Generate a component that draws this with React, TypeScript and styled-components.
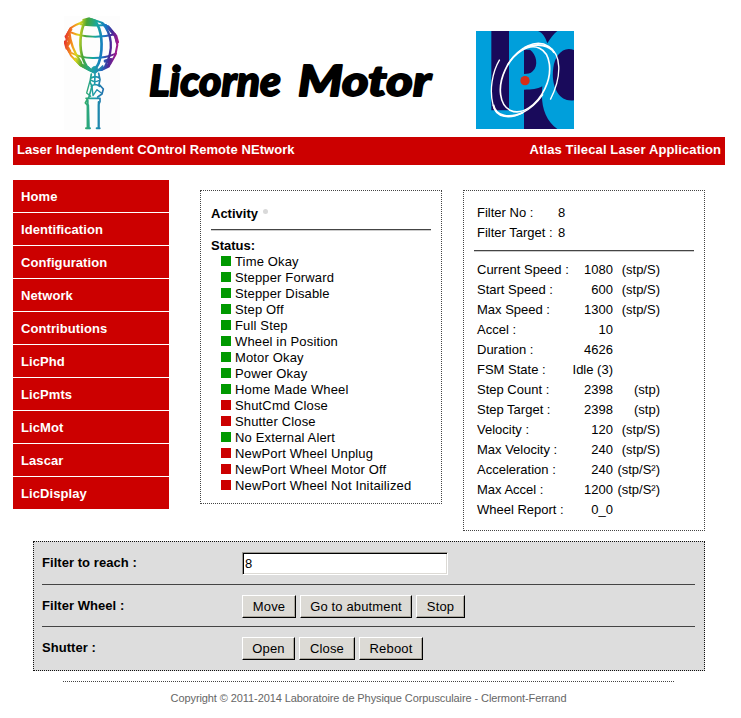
import React from "react";
import styled, { createGlobalStyle } from "styled-components";

const GlobalStyle = createGlobalStyle`
  *, *::before, *::after { box-sizing: border-box; }
  body {
    margin: 0;
    background: #fff;
    color: #000;
    font-family: "Liberation Sans", Arial, Helvetica, sans-serif;
    font-size: 13px;
    line-height: 16px;
  }
`;

const Page = styled.div`
  width: 741px;
  height: 718px;
  padding: 0 13px;
  overflow: hidden;
`;

const Header = styled.header`
  display: flex;
  align-items: flex-start;
  height: 137px;
  padding-left: 51px;
`;

const AtlasMark = styled.svg`
  flex: none;
  width: 56px;
  height: 114px;
  margin-top: 16px;
`;

const Wordmark = styled.svg`
  flex: none;
  width: 300px;
  height: 50px;
  margin: 55px 0 0 20px;
  font-family: Lato, "Liberation Sans", sans-serif;
  font-size: 42px;
  font-weight: 900;
  font-style: italic;
  stroke: #000;
  stroke-width: 1.8px;
  stroke-linejoin: round;
`;

const LpcMark = styled.svg`
  flex: none;
  width: 98px;
  height: 98px;
  margin: 31px 0 0 36px;
`;

const TitleBar = styled.div`
  display: flex;
  justify-content: space-between;
  width: 712px;
  height: 28px;
  padding: 5px 4px;
  background: #cc0000;
  color: #fff;
  font-weight: bold;
`;

const Tagline = styled.span<{ $tracking: number }>`
  letter-spacing: ${(p) => p.$tracking}px;
`;

const Columns = styled.div`
  display: flex;
  align-items: flex-start;
  height: 376px;
  padding-top: 15px;
`;

const Nav = styled.nav`
  display: flex;
  flex: none;
  flex-direction: column;
  gap: 1px;
  width: 156px;
  margin-right: 31px;
`;

const NavLink = styled.a`
  height: 32px;
  padding: 9px 8px 7px;
  background: #cc0000;
  color: #fff;
  font-weight: bold;
  letter-spacing: 0.08px;
`;

const Panel = styled.section<{ $height: number }>`
  flex: none;
  width: 242px;
  height: ${(p) => p.$height}px;
  margin-top: 10px;
  padding: 10px;
  border: 1px dotted #444;

  & + & {
    margin-left: 21px;
  }
`;

const Rule = styled.hr<{ $gap: string; $soft?: boolean }>`
  height: 1px;
  margin: ${(p) => p.$gap};
  border: 0;
  background: #444;
  box-shadow: ${(p) => (p.$soft ? "0 1px #ccc" : "none")};
`;

const Activity = styled.div`
  display: flex;
  height: 28px;
  padding-top: 5px;
  font-weight: bold;
`;

const Pulse = styled.span`
  width: 5px;
  height: 5px;
  margin: 3px 0 0 5px;
  border-radius: 50%;
  background: #d9d9d9;
`;

const StatusList = styled.ul`
  margin: 0;
  padding: 0 0 0 10px;
  list-style: none;
  letter-spacing: 0.15px;
`;

const StatusItem = styled.li`
  display: flex;
  gap: 4px;
  height: 16px;
  white-space: nowrap;
`;

const Lamp = styled.span<{ $ok: boolean }>`
  width: 10px;
  height: 10px;
  margin-top: 2px;
  background: ${(p) => (p.$ok ? "#009900" : "#cc0000")};
`;

const FilterSummary = styled.div`
  padding-top: 2px;
  height: 40px;
`;

const Reading = styled.div<{ $columns: string }>`
  display: grid;
  grid-template-columns: ${(p) => p.$columns};
  height: 20px;
  padding: 2px 0 2px 3px;
  white-space: nowrap;
`;

const Right = styled.span`
  text-align: right;
`;

const ControlBox = styled.form`
  width: 672px;
  height: 130px;
  margin-left: 20px;
  padding: 10px 9px 0 8px;
  background: #ddd;
  border: 1px dotted #111;
`;

const ControlRow = styled.div`
  display: flex;
  height: 23px;
`;

const ControlLabel = styled.label`
  width: 200px;
  padding-top: 3px;
  font-weight: bold;
  letter-spacing: 0.05px;
`;

const Field = styled.input`
  width: 206px;
  height: 23px;
  padding: 0 2px;
  font: inherit;
  color: #000;
  background: #fff;
  border: 1px solid;
  border-color: #9c9a94 #fff #fff #9c9a94;
  border-radius: 0;
  box-shadow: inset 1px 1px #000, inset -1px -1px #dcdad5;
  outline: none;
`;

const Button = styled.button<{ $width: number }>`
  width: ${(p) => p.$width}px;
  height: 23px;
  margin-right: 4px;
  padding: 0;
  font: inherit;
  letter-spacing: 0.15px;
  white-space: nowrap;
  color: #000;
  background: #dcdad5;
  border: 1px solid;
  border-color: #fff #000 #000 #fff;
  border-radius: 0;
  box-shadow: inset -1px -1px #aaa69d;
`;

const Footer = styled.footer`
  width: 611px;
  margin: 10px 0 0 50px;
  padding-top: 8px;
  border-top: 1px dotted #444;
  color: #666;
  font-size: 11px;
  letter-spacing: -0.09px;
  text-align: center;
`;

const pages = ["Home", "Identification", "Configuration", "Network", "Contributions", "LicPhd", "LicPmts", "LicMot", "Lascar", "LicDisplay"];

const statuses: [string, boolean][] = [
  ["Time Okay", true],
  ["Stepper Forward", true],
  ["Stepper Disable", true],
  ["Step Off", true],
  ["Full Step", true],
  ["Wheel in Position", true],
  ["Motor Okay", true],
  ["Power Okay", true],
  ["Home Made Wheel", true],
  ["ShutCmd Close", false],
  ["Shutter Close", false],
  ["No External Alert", true],
  ["NewPort Wheel Unplug", false],
  ["NewPort Wheel Motor Off", false],
  ["NewPort Wheel Not Initailized", false],
];

const readings: [string, string, string][] = [
  ["Current Speed :", "1080", "(stp/S)"],
  ["Start Speed :", "600", "(stp/S)"],
  ["Max Speed :", "1300", "(stp/S)"],
  ["Accel :", "10", ""],
  ["Duration :", "4626", ""],
  ["FSM State :", "Idle (3)", ""],
  ["Step Count :", "2398", "(stp)"],
  ["Step Target :", "2398", "(stp)"],
  ["Velocity :", "120", "(stp/S)"],
  ["Max Velocity :", "240", "(stp/S)"],
  ["Acceleration :", "240", "(stp/S²)"],
  ["Max Accel :", "1200", "(stp/S²)"],
  ["Wheel Report :", "0_0", ""],
];

function AtlasLogo() {
  return (
    <AtlasMark viewBox="27 18 168 342" aria-hidden="true">
      <defs>
        <linearGradient id="spectrum" gradientUnits="userSpaceOnUse" x1="28" y1="90" x2="190" y2="110">
          <stop offset="0" stopColor="#e5322b" />
          <stop offset=".16" stopColor="#f59a1c" />
          <stop offset=".25" stopColor="#d9d51d" />
          <stop offset=".37" stopColor="#49a535" />
          <stop offset=".56" stopColor="#16a7a0" />
          <stop offset=".72" stopColor="#1779c4" />
          <stop offset=".86" stopColor="#4a2797" />
          <stop offset="1" stopColor="#b01689" />
        </linearGradient>
        <linearGradient id="figure" gradientUnits="userSpaceOnUse" x1="88" y1="0" x2="148" y2="0">
          <stop offset="0" stopColor="#35ad63" />
          <stop offset=".5" stopColor="#1b9cac" />
          <stop offset="1" stopColor="#246cae" />
        </linearGradient>
      </defs>
      <rect x="27" y="18" width="168" height="342" fill="#fdfdfd" />
      <g fill="none" stroke="url(#spectrum)" strokeLinecap="round" strokeLinejoin="round">
        <path d="M47 54C57 47 65 43 76 39L98 28L112 28L138 37L164 55L181 78L187 105L181 135L166 161L139 180L108 183L75 165L48 137L34 109L35 76Z" strokeWidth="6" />
        <path d="M89 37C74 67 72 115 84 146C90 164 99 178 111 183M119 32C142 58 144 113 134 150C130 167 122 176 112 183" strokeWidth="8" />
        <path d="M50 68C83 83 142 83 180 73M50 129C84 148 137 150 183 131M76 42C100 49 126 46 153 45" strokeWidth="6" />
        <path d="M43 66C45 93 56 125 78 158M142 39C170 71 178 117 151 168" strokeWidth="7" />
        <path d="M84 29L103 24L127 34L120 45L86 44Z" fill="url(#spectrum)" strokeWidth="4" />
        <path d="M34 80L45 94L35 108L44 124M31 96L36 114M47 58L37 76M158 50L182 78L187 96M151 153L168 149L160 168L140 178M61 148L78 164L102 177" strokeWidth="10" />
      </g>
      <g fill="none" stroke="url(#figure)" strokeLinecap="round" strokeLinejoin="round">
        <path d="M111 173Q123 163 129 176L126 187Q115 194 109 184Z" fill="url(#figure)" strokeWidth="2" />
        <path d="M112 185L100 171M127 183L143 168M109 192L105 216L111 229L101 264M131 190L135 209L132 223L145 237L141 252L128 261M107 205Q120 195 133 204M120 188L119 224M109 229Q120 218 134 229" strokeWidth="5" />
        <path d="M104 216L95 249L107 259M111 229L114 257L126 239L139 249M109 211Q119 218 131 212" strokeWidth="4" />
        <path d="M99 264L91 279L98 286V355M93 265H135V275L131 284V354M100 285L102 355" strokeWidth="5" />
        <path d="M98 271V355M131 276V355M93 355H105M125 355H134" strokeWidth="6" />
      </g>
    </AtlasMark>
  );
}

function LpcLogo() {
  return (
    <LpcMark viewBox="18 18 294 294" aria-hidden="true">
      <rect x="18" y="18" width="294" height="294" fill="#190a5b" />
      <path d="M18 18H64V256H117V18H204C218 23 226 37 232 55C241 40 250 27 262 18H312V75C279 61 254 93 250 128C242 181 265 233 312 226V312H262C225 285 211 240 217 184C201 192 186 194 162 194V312H18Z" fill="#009fdb" />
      <path d="M162 74H180C199 87 207 122 188 139C181 146 173 147 162 147Z" fill="#190a5b" />
      <g fill="none" stroke="#fff">
        <ellipse cx="165" cy="163" rx="66" ry="103" transform="rotate(25 165 163)" strokeWidth="5" />
        <path d="M89 104C66 142 58 197 69 239C76 282 123 282 158 263C183 250 203 231 219 208" strokeWidth="4" />
        <path d="M112 120C146 66 198 40 236 64C273 87 278 150 241 224" strokeWidth="4" />
        <path d="M70 239C77 276 119 281 158 263M163 69C203 52 240 61 253 83" strokeWidth="6" />
      </g>
      <circle cx="165" cy="167" r="14" fill="#d62d16" />
    </LpcMark>
  );
}

export default function App() {
  return (
    <>
      <GlobalStyle />
      <Page>
        <Header>
          <AtlasLogo />
          <Wordmark role="img" aria-label="Licorne Motor">
            <text x="9" y="41" textLength="132" lengthAdjust="spacingAndGlyphs">Licorne</text>
            <text x="158" y="41" textLength="133" lengthAdjust="spacingAndGlyphs">Motor</text>
          </Wordmark>
          <LpcLogo />
        </Header>
        <TitleBar>
          <Tagline $tracking={0.06}>Laser Independent COntrol Remote NEtwork</Tagline>
          <Tagline $tracking={0.12}>Atlas Tilecal Laser Application</Tagline>
        </TitleBar>
        <Columns>
          <Nav>
            {pages.map((page) => <NavLink key={page}>{page}</NavLink>)}
          </Nav>
          <Panel $height={314}>
            <Activity>Activity<Pulse /></Activity>
            <Rule $gap="0 0 8px" $soft />
            <strong>Status:</strong>
            <StatusList>
              {statuses.map(([name, ok]) => (
                <StatusItem key={name}><Lamp $ok={ok} />{name}</StatusItem>
              ))}
            </StatusList>
          </Panel>
          <Panel $height={341}>
            <FilterSummary>
              <Reading $columns="81px 1fr"><span>Filter No :</span><span>8</span></Reading>
              <Reading $columns="81px 1fr"><span>Filter Target :</span><span>8</span></Reading>
            </FilterSummary>
            <Rule $gap="9px 0" $soft />
            {readings.map(([name, value, unit]) => (
              <Reading key={name} $columns="93px 43px 47px">
                <span>{name}</span><Right>{value}</Right><Right>{unit}</Right>
              </Reading>
            ))}
          </Panel>
        </Columns>
        <ControlBox>
          <ControlRow>
            <ControlLabel htmlFor="filter">Filter to reach :</ControlLabel>
            <Field id="filter" defaultValue="8" />
          </ControlRow>
          <Rule $gap="9px 0 10px" />
          <ControlRow>
            <ControlLabel>Filter Wheel :</ControlLabel>
            <Button type="button" $width={54}>Move</Button>
            <Button type="button" $width={112}>Go to abutment</Button>
            <Button type="button" $width={49}>Stop</Button>
          </ControlRow>
          <Rule $gap="8px 0 10px" />
          <ControlRow>
            <ControlLabel>Shutter :</ControlLabel>
            <Button type="button" $width={53}>Open</Button>
            <Button type="button" $width={56}>Close</Button>
            <Button type="button" $width={64}>Reboot</Button>
          </ControlRow>
        </ControlBox>
        <Footer>Copyright © 2011-2014 Laboratoire de Physique Corpusculaire - Clermont-Ferrand</Footer>
      </Page>
    </>
  );
}
